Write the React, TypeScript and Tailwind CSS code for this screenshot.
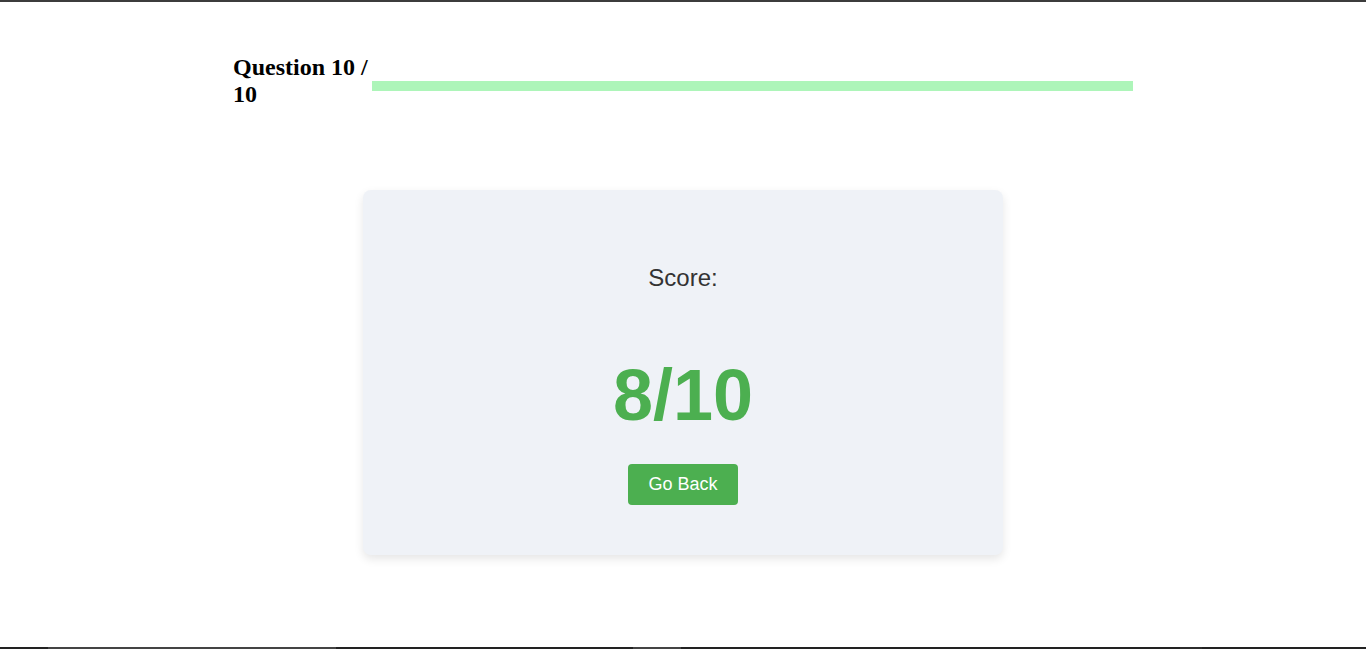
export default function App() {
  return (
    <div className="h-screen flex flex-col bg-white">
      <div className="h-[2px] bg-[#3c3c3c] shrink-0" />

      <main className="flex-1">
        <div className="w-[900px] mx-auto pt-[52px] flex items-start">
          <h2 className="w-[139px] shrink-0 font-['Liberation_Serif',serif] font-bold text-[24px] leading-[27px] text-black">
            Question 10 / 10
          </h2>
          <div className="flex-1 h-[10px] mt-[27px] bg-[#adf5b9]" />
        </div>

        <div className="w-[640px] mx-auto mt-[82px] h-[365px] rounded-lg bg-[#eff2f7] shadow-[0_4px_10px_rgba(0,0,0,0.1)] flex flex-col items-center pt-[72px] font-['Liberation_Sans',Arial,sans-serif]">
          <h3 className="text-[24px] leading-[32px] text-[#333]">Score:</h3>
          <p className="mt-[65px] text-[72px] leading-none font-bold text-[#4caf50]">8/10</p>
          <button className="mt-[33px] h-[41px] px-5 rounded bg-[#4caf50] text-white text-[18px]">
            Go Back
          </button>
        </div>
      </main>

      <div className="h-[2px] shrink-0 flex bg-[#222]">
        <div className="w-[48px]" />
        <div className="w-[288px] bg-[#444]" />
        <div className="w-[297px]" />
        <div className="w-[48px] bg-[#444]" />
        <div className="w-[499px]" />
        <div className="w-[22px] bg-[#2c2c2c]" />
      </div>
    </div>
  );
}
